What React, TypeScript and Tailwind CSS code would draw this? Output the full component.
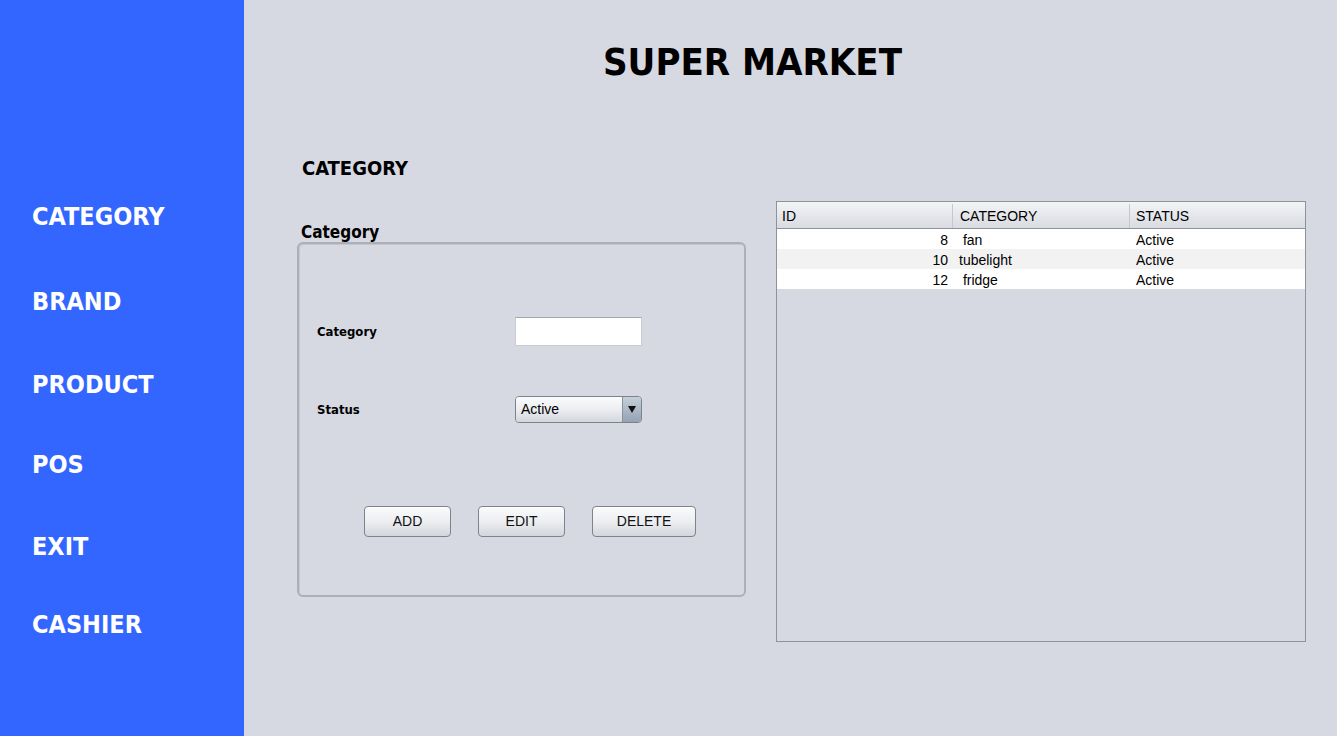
import { useState } from "react";

const menu = [
  { label: "CATEGORY", mt: "mt-[202px]" },
  { label: "BRAND", mt: "mt-[55px]" },
  { label: "PRODUCT", mt: "mt-[53px]" },
  { label: "POS", mt: "mt-[50px]" },
  { label: "EXIT", mt: "mt-[52px]" },
  { label: "CASHIER", mt: "mt-[48px]" },
];

const rows = [
  { id: 8, name: "fan", status: "Active" },
  { id: 10, name: "tubelight", status: "Active" },
  { id: 12, name: "fridge", status: "Active" },
];

const tahoma = "font-['DejaVu_Sans_Condensed','DejaVu_Sans',sans-serif]";

function Btn({ children, w }: { children: string; w: string }) {
  return (
    <button
      className={`${w} h-[31px] rounded-[4px] border border-[#7d838c] bg-gradient-to-b from-[#fbfbfc] via-[#eceef1] to-[#d3d6dc] text-[14px] text-[#111] font-['Liberation_Sans',Arial,sans-serif] shadow-[inset_0_1px_0_#fff]`}
    >
      {children}
    </button>
  );
}

export default function App() {
  const [category, setCategory] = useState("");

  return (
    <div className="flex w-[1337px] h-[736px] overflow-hidden">
      <aside className={`w-[244px] shrink-0 bg-[#3366ff] flex flex-col pl-[32px] ${tahoma}`}>
        {menu.map((m) => (
          <div key={m.label} className={`${m.mt} text-white font-bold text-[25px] leading-[30px]`}>
            {m.label}
          </div>
        ))}
      </aside>

      <main className={`flex-1 bg-[#d6d9e1] ${tahoma}`}>
        <h1 className="pl-[359px] pt-[40px] text-[38px] leading-[44px] font-bold text-black">SUPER MARKET</h1>

        <h2 className="pl-[58px] mt-[72px] text-[20px] leading-[24px] font-bold text-black">CATEGORY</h2>

        <div className="flex pl-[53px] mt-[21px] gap-[30px]">
          <div className="w-[449px] pt-[22px]">
            <div className="pl-[4px] text-[17px] leading-[18px] font-bold text-black">Category</div>
            <div className="mt-[1px] h-[355px] rounded-[6px] border-2 border-[#abafb7] shadow-[inset_1px_1px_0_#c3c6cc]">
              <div className="flex items-center pl-[18px] pt-[73px]">
                <span className="w-[198px] text-[13px] font-bold text-black">Category</span>
                <input
                  value={category}
                  onChange={(e) => setCategory(e.target.value)}
                  className="w-[127px] h-[29px] bg-white border border-[#c9ccd2] border-t-[#a3a7ae] outline-none px-1 text-[13px]"
                />
              </div>
              <div className="flex items-center pl-[18px] mt-[50px]">
                <span className="w-[198px] text-[13px] font-bold text-black">Status</span>
                <div className="w-[127px] h-[27px] flex rounded-[4px] border border-[#7d838c] overflow-hidden font-['Liberation_Sans',Arial,sans-serif]">
                  <div className="flex-1 flex items-center pl-[5px] text-[14px] text-black bg-gradient-to-b from-[#fbfbfc] via-[#eceef1] to-[#d3d6dc]">
                    Active
                  </div>
                  <div className="w-[19px] flex items-center justify-center bg-gradient-to-b from-[#c6d0dc] to-[#94a2b4] border-l border-[#8b929c]">
                    <svg width="8" height="7" viewBox="0 0 8 7">
                      <path d="M0 0 L8 0 L4 7 Z" fill="#111" />
                    </svg>
                  </div>
                </div>
              </div>
              <div className="flex pl-[65px] mt-[83px] gap-[27px]">
                <Btn w="w-[87px]">ADD</Btn>
                <Btn w="w-[87px]">EDIT</Btn>
                <Btn w="w-[104px]">DELETE</Btn>
              </div>
            </div>
          </div>

          <div className="w-[530px] h-[441px] border border-[#8e939b] bg-[#d6d9e1] font-['Liberation_Sans',Arial,sans-serif] text-[14px] text-black">
            <div className="flex h-[27px] pt-[2px] border-b border-[#8e939b] bg-gradient-to-b from-[#f3f4f6] to-[#d8dbe0]">
              <div className="w-[176px] pl-[5px] flex items-center border-r border-[#c4c7cd]">ID</div>
              <div className="w-[177px] pl-[7px] flex items-center border-r border-[#c4c7cd]">CATEGORY</div>
              <div className="flex-1 pl-[6px] flex items-center">STATUS</div>
            </div>
            {rows.map((r, i) => (
              <div key={r.id} className={`flex h-[20px] items-center pt-[2px] ${i % 2 === 1 ? "bg-[#f2f2f2]" : "bg-white"}`}>
                <div className="w-[176px] pr-[5px] text-right">{r.id}</div>
                <div className="w-[177px] pl-[6px] whitespace-pre">{r.name === "tubelight" ? r.name : " " + r.name}</div>
                <div className="flex-1 pl-[6px]">{r.status}</div>
              </div>
            ))}
          </div>
        </div>
      </main>
    </div>
  );
}
